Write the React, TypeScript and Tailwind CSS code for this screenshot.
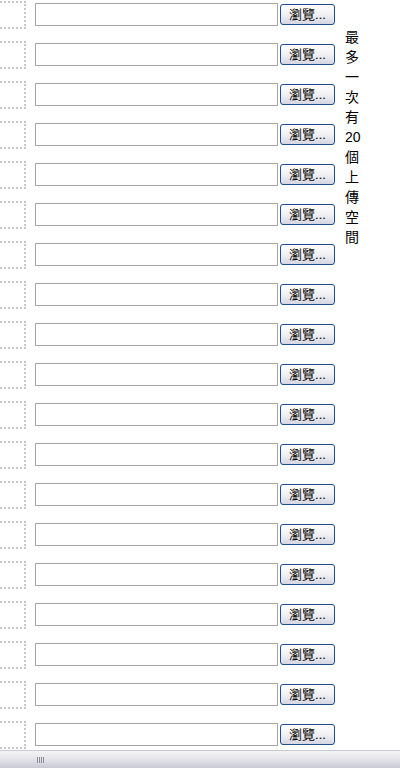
const rows = Array.from({ length: 19 }, (_, i) => i);
const note = ["最", "多", "一", "次", "有", "20", "個", "上", "傳", "空", "間"];

function UploadRow() {
  return (
    <div className="flex h-[40px] shrink-0 items-start">
      <div className="mt-[1px] h-[28px] w-[26px] shrink-0 border-r-2 border-b-2 border-t-2 border-dotted border-[#c8c8c8]" />
      <input
        type="text"
        className="ml-[9px] mt-[3px] h-[23px] w-[243px] shrink-0 border border-[#a5a5a5] bg-white outline-none"
      />
      <button className="ml-[2px] mt-[4px] flex h-[21px] w-[55px] shrink-0 items-center justify-center rounded-[3px] border border-[#1c4f8c] bg-gradient-to-b from-white via-[#f1f1f4] to-[#d6d6e2] text-[13px] leading-none text-black">
        瀏覽...
      </button>
    </div>
  );
}

export default function App() {
  return (
    <div
      className="flex h-[768px] w-[400px] flex-col overflow-hidden bg-white"
      style={{ fontFamily: '"Liberation Sans", "Noto Sans CJK TC", sans-serif' }}
    >
      <div className="flex h-[750px] shrink-0 items-start overflow-hidden">
        <div className="flex shrink-0 flex-col">
          {rows.map((r) => (
            <UploadRow key={r} />
          ))}
        </div>
        <div className="ml-[10px] mt-[27px] flex w-[16px] flex-col text-[14px] leading-[20px] text-black">
          {note.map((c, i) => (
            <span key={i} className="whitespace-nowrap">
              {c}
            </span>
          ))}
        </div>
      </div>
      <div className="flex h-[18px] shrink-0 items-center border-t border-[#c9c9d2] bg-gradient-to-b from-[#f4f4f6] via-[#e3e3ea] to-[#c9c9d4]">
        <div className="ml-[37px] flex gap-[1px]">
          <span className="h-[6px] w-[1px] bg-[#8c8c99]" />
          <span className="h-[6px] w-[1px] bg-[#8c8c99]" />
          <span className="h-[6px] w-[1px] bg-[#8c8c99]" />
          <span className="h-[6px] w-[1px] bg-[#8c8c99]" />
        </div>
      </div>
    </div>
  );
}
